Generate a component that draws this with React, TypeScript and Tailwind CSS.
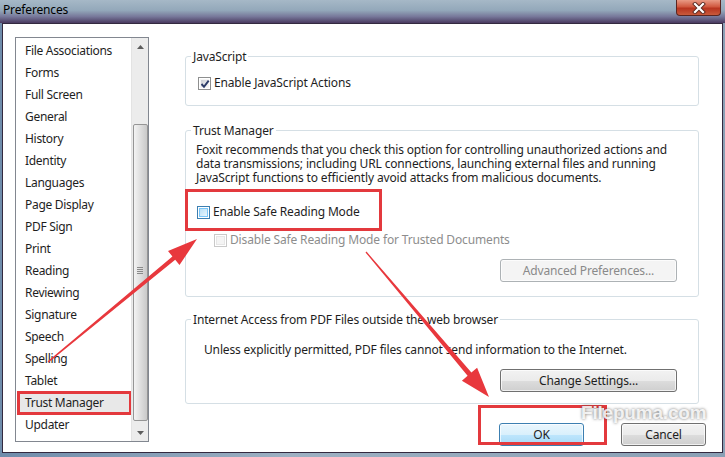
import { ReactNode } from "react";

const items = [
    "File Associations",
    "Forms",
    "Full Screen",
    "General",
    "History",
    "Identity",
    "Languages",
    "Page Display",
    "PDF Sign",
    "Print",
    "Reading",
    "Reviewing",
    "Signature",
    "Speech",
    "Spelling",
    "Tablet",
    "Trust Manager",
    "Updater",
];

const GroupBox = ({ title, className, children }: { title: string; className?: string; children: ReactNode }) => (
    <fieldset className={`mr-[7px] border border-[#d5dfe5] rounded-[3px] ${className ?? ""}`}>
        <legend className="ml-[5px] px-[2px] leading-[16px] pt-[1px]">{title}</legend>
        {children}
    </fieldset>
);

// checkbox variants: normal (checked), hover (blue), disabled
const CheckBox = ({ kind, checked }: { kind: "normal" | "hover" | "disabled"; checked?: boolean }) => {
    const outer =
        kind === "hover" ? "border-[#3c7fb1]" : kind === "disabled" ? "border-[#c9c9c9]" : "border-[#8e8f8f]";
    const inner =
        kind === "hover"
            ? "bg-[linear-gradient(135deg,#b9e0f7,#e9f6fd)] border-[#79c6f9]"
            : kind === "disabled"
              ? "bg-[#f4f4f4] border-[#e6e6e6]"
              : "bg-[linear-gradient(135deg,#cbcfd5,#f6f6f6)] border-[#f4f4f4]";
    return (
        <span className={`relative w-[13px] h-[13px] border ${outer} bg-white p-[1px] shrink-0`}>
            <span className={`block w-full h-full border ${inner}`} />
            {checked && (
                <svg className="absolute left-[1px] top-[1px]" width="10" height="10" viewBox="0 0 10 10">
                    <path d="M1.5 5 L4 7.8 L8.7 1.6" fill="none" stroke="#2a3a67" strokeWidth="1.9" />
                </svg>
            )}
        </span>
    );
};

const Button = ({ label, kind = "normal", className }: { label: string; kind?: "normal" | "default" | "disabled"; className?: string }) => {
    const look =
        kind === "default"
            ? "border-[#3c7fb1] bg-[linear-gradient(#eaf6fd,#d9f0fc_50%,#bee6fd_51%,#a7d9f5)] text-[#1e1e1e]"
            : kind === "disabled"
              ? "border-[#adb2b5] bg-[#f4f4f4] text-[#8a8a8a]"
              : "border-[#707070] bg-[linear-gradient(#f2f2f2,#ebebeb_50%,#dddddd_51%,#cfcfcf)] text-[#1e1e1e]";
    return (
        <div className={`h-[23px] flex items-center justify-center rounded-[3px] border shadow-[inset_0_0_0_1px_rgba(255,255,255,0.7)] ${look} ${className ?? ""}`}>
            {label}
        </div>
    );
};

const Arrow = ({ dir }: { dir: "up" | "down" }) => (
    <svg width="7" height="4" viewBox="0 0 7 4">
        <path d={dir === "up" ? "M0 4 L3.5 0 L7 4 Z" : "M0 0 L3.5 4 L7 0 Z"} fill="#5d5d5d" />
    </svg>
);

const App = () => {
    return (
        <div className="relative w-[725px] h-[457px] overflow-hidden flex flex-col bg-[linear-gradient(to_right,#6f8cab,#9db0c2_40%,#8aa0b5)] font-['Noto_Sans',sans-serif] text-[12px] tracking-[-0.15px] text-[#1e1e1e]">
            {/* title bar */}
            <div className="h-[23px] shrink-0 flex items-start bg-[linear-gradient(to_bottom,#a6b8c7_0%,#93a8ba_45%,#77789a_72%,#4a3a60_100%)]">
                <span className="pl-[3px] pt-[2px] leading-[16px] text-black">Preferences</span>
                <div className="ml-auto mr-[4px] w-[45px] h-[16px] rounded-b-[4px] border border-t-0 border-[#5b2520] bg-[linear-gradient(#e99a85,#d0583f_45%,#b8341f_55%,#c95a3c)] flex items-center justify-center">
                    <svg width="14" height="12" viewBox="0 0 14 12">
                        <path d="M3 2 L11 10 M11 2 L3 10" stroke="#5a2a22" strokeWidth="4" strokeLinecap="square" />
                        <path d="M3 2 L11 10 M11 2 L3 10" stroke="#ffffff" strokeWidth="2.2" strokeLinecap="square" />
                    </svg>
                </div>
            </div>

            {/* client area */}
            <div className="flex-1 mx-[2px] mb-[4px] bg-white border border-[#33293f] flex">
                {/* category list */}
                <div className="ml-[12px] mt-[13px] w-[134px] h-[405px] border border-[#828790] flex">
                    <div className="flex-1 pt-[2px] tracking-[-0.3px]">
                        {items.map((it) => (
                            <div
                                key={it}
                                className={`ml-[2px] h-[22px] pl-[7px] flex items-center whitespace-nowrap ${
                                    it === "Trust Manager"
                                        ? "bg-[#e8e8e8] outline-[3px] outline-solid outline-[#e3393d] -outline-offset-[2px]"
                                        : ""
                                }`}
                            >
                                {it}
                            </div>
                        ))}
                    </div>
                    <div className="w-[17px] bg-[#ececec] border-l border-[#e3e3e3] flex flex-col items-center">
                        <div className="h-[17px] flex items-center justify-center">
                            <Arrow dir="up" />
                        </div>
                        <div className="mt-[69px] w-[15px] h-[297px] rounded-[2px] border border-[#959595] bg-[linear-gradient(to_right,#f3f3f3,#dadada_60%,#c9c9c9)] flex items-center justify-center">
                            <div className="flex flex-col gap-[1px] -mt-[5px]">
                                <span className="w-[6px] h-[1px] bg-[#8a8a8a]" />
                                <span className="w-[6px] h-[1px] bg-[#8a8a8a]" />
                                <span className="w-[6px] h-[1px] bg-[#8a8a8a]" />
                                <span className="w-[6px] h-[1px] bg-[#8a8a8a]" />
                            </div>
                        </div>
                        <div className="mt-auto h-[17px] flex items-center justify-center">
                            <Arrow dir="down" />
                        </div>
                    </div>
                </div>

                {/* settings */}
                <div className="ml-[36px] pr-[16px] flex-1 flex flex-col mt-[24px]">
                    <GroupBox title="JavaScript" className="pb-[14px]">
                        <div className="mt-[10px] ml-[12px] h-[16px] flex items-center gap-[3px]">
                            <CheckBox kind="normal" checked />
                            <span>Enable JavaScript Actions</span>
                        </div>
                    </GroupBox>

                    <GroupBox title="Trust Manager" className="mt-[16px] pb-[14px]">
                        <p className="mt-[4px] ml-[10px] leading-[14px] whitespace-nowrap">
                            Foxit recommends that you check this option for controlling unauthorized actions and
                            <br />
                            data transmissions; including URL connections, launching external files and running
                            <br />
                            JavaScript functions to efficiently avoid attacks from malicious documents.
                        </p>
                        <div className="mt-[19px] ml-[11px] h-[16px] flex items-center gap-[3px]">
                            <CheckBox kind="hover" />
                            <span>Enable Safe Reading Mode</span>
                        </div>
                        <div className="mt-[12px] ml-[28px] h-[16px] flex items-center gap-[3px] text-[#8d8d8d]">
                            <CheckBox kind="disabled" />
                            <span>Disable Safe Reading Mode for Trusted Documents</span>
                        </div>
                        <div className="mt-[11px] mr-[21px] flex justify-end">
                            <Button label="Advanced Preferences..." kind="disabled" className="w-[177px]" />
                        </div>
                    </GroupBox>

                    <GroupBox title="Internet Access from PDF Files outside the web browser" className="mt-[14px] pb-[11px]">
                        <div className="mt-[14px] ml-[18px] h-[16px] flex items-center">
                            Unless explicitly permitted, PDF files cannot send information to the Internet.
                        </div>
                        <div className="mt-[11px] mr-[21px] flex justify-end">
                            <Button label="Change Settings..." className="w-[177px]" />
                        </div>
                    </GroupBox>

                    <div className="mt-[19px] flex justify-end gap-[37px]">
                        <Button label="OK" kind="default" className="w-[85px]" />
                        <Button label="Cancel" className="w-[85px]" />
                    </div>
                </div>
            </div>

            {/* annotations laid over the dialog */}
            <div className="absolute left-[185px] top-[189px] w-[197px] h-[42px] border-[3px] border-[#e3393d]" />
            <div className="absolute left-[478px] top-[405px] w-[129px] h-[40px] border-[3px] border-[#e3393d]" />
            <div className="absolute left-[581px] top-[401px] font-['Liberation_Sans',sans-serif] font-bold text-[19px] leading-[24px] tracking-[-0.2px] text-white/85 [text-shadow:0_0_3px_rgba(60,60,60,0.75)]">
                Filepuma.com
            </div>
            <svg className="absolute left-0 top-0 pointer-events-none" width="725" height="457" viewBox="0 0 725 457">
                <polygon
                    points="48.5,362.6 175.2,259.8 179.5,265 197,239 168,251 172.4,256.4 47.5,361.4"
                    fill="#e8383d"
                />
                <polygon
                    points="366.5,251.6 471.4,372.6 477.1,367.7 489,397 461.9,380.7 467.6,375.8 365.5,252.4"
                    fill="#e8383d"
                />
            </svg>
        </div>
    );
};

export default App;
